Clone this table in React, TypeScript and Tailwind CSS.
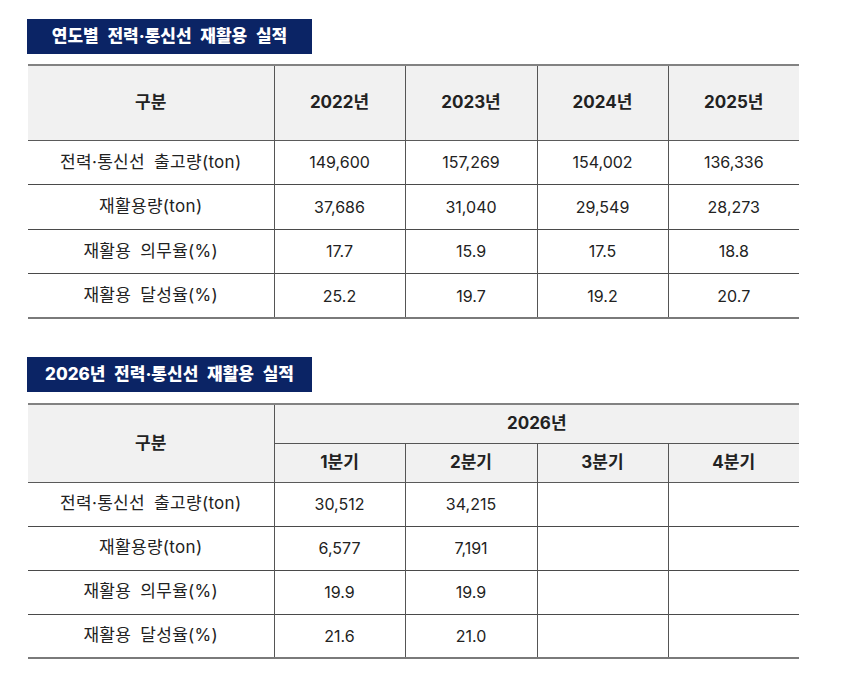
const years = ['2022년', '2023년', '2024년', '2025년'];

const yearlyRows = [
  { label: '전력·통신선 출고량(ton)', values: ['149,600', '157,269', '154,002', '136,336'] },
  { label: '재활용량(ton)', values: ['37,686', '31,040', '29,549', '28,273'] },
  { label: '재활용 의무율(%)', values: ['17.7', '15.9', '17.5', '18.8'] },
  { label: '재활용 달성율(%)', values: ['25.2', '19.7', '19.2', '20.7'] },
];

const quarters = ['1분기', '2분기', '3분기', '4분기'];

const quarterRows = [
  { label: '전력·통신선 출고량(ton)', values: ['30,512', '34,215', '', ''] },
  { label: '재활용량(ton)', values: ['6,577', '7,191', '', ''] },
  { label: '재활용 의무율(%)', values: ['19.9', '19.9', '', ''] },
  { label: '재활용 달성율(%)', values: ['21.6', '21.0', '', ''] },
];

function SectionTitle({ children }: { children: string }) {
  return (
    <div className="w-[285px] h-[35px] bg-[#0b2465] flex items-center justify-center text-white text-[17px] font-extrabold [word-spacing:5px]">
      {children}
    </div>
  );
}

function Cols() {
  return (
    <colgroup>
      <col className="w-[246px]" />
      <col className="w-[131px]" />
      <col className="w-[132px]" />
      <col className="w-[131px]" />
      <col className="w-[131px]" />
    </colgroup>
  );
}

function BodyRows({ rows, tall }: { rows: { label: string; values: string[] }[]; tall?: boolean }) {
  return (
    <tbody>
      {rows.map((row, i) => (
        <tr
          key={row.label}
          className={`${tall ? 'h-[44.5px]' : 'h-[44px]'} ${
            i === rows.length - 1 ? 'border-b-2 border-[#7a7a7a]' : 'border-b border-[#4a4a4a]'
          }`}
        >
          <td className="text-center text-[17px] tracking-[0.3px] [word-spacing:4px] text-[#222]">{row.label}</td>
          {row.values.map((v, j) => (
            <td key={j} className="border-l border-[#555] text-center text-[16px] text-[#222]">
              {v}
            </td>
          ))}
        </tr>
      ))}
    </tbody>
  );
}

export default function App() {
  return (
    <div className="w-[841px] h-[686px] bg-white pt-[19px] pl-[27px] font-['Inter','Noto_Sans_CJK_KR',sans-serif]">
      <SectionTitle>연도별 전력·통신선 재활용 실적</SectionTitle>

      <table className="mt-[10px] ml-px w-[771px] table-fixed border-collapse">
        <Cols />
        <thead>
          <tr className="h-[75px] bg-[#f1f1f1] border-t-2 border-b border-t-[#828282] border-b-[#5a5a5a]">
            <th className="text-[17px] font-bold text-[#222]">구분</th>
            {years.map((y) => (
              <th key={y} className="border-l border-[#555] text-[17px] font-bold text-[#222]">
                {y}
              </th>
            ))}
          </tr>
        </thead>
        <BodyRows rows={yearlyRows} tall />
      </table>

      <div className="mt-[38px]">
        <SectionTitle>2026년 전력·통신선 재활용 실적</SectionTitle>
      </div>

      <table className="mt-[11px] ml-px w-[771px] table-fixed border-collapse">
        <Cols />
        <thead>
          <tr className="h-[39px] bg-[#f1f1f1] border-t-2 border-t-[#828282]">
            <th rowSpan={2} className="text-[17px] font-bold text-[#222] border-b border-[#5a5a5a]">
              구분
            </th>
            <th colSpan={4} className="border-l border-b border-[#555] text-[17px] font-bold text-[#222]">
              2026년
            </th>
          </tr>
          <tr className="h-[39px] bg-[#f1f1f1] border-b border-[#5a5a5a]">
            {quarters.map((q) => (
              <th key={q} className="border-l border-[#555] text-[17px] font-bold text-[#222]">
                {q}
              </th>
            ))}
          </tr>
        </thead>
        <BodyRows rows={quarterRows} />
      </table>
    </div>
  );
}
